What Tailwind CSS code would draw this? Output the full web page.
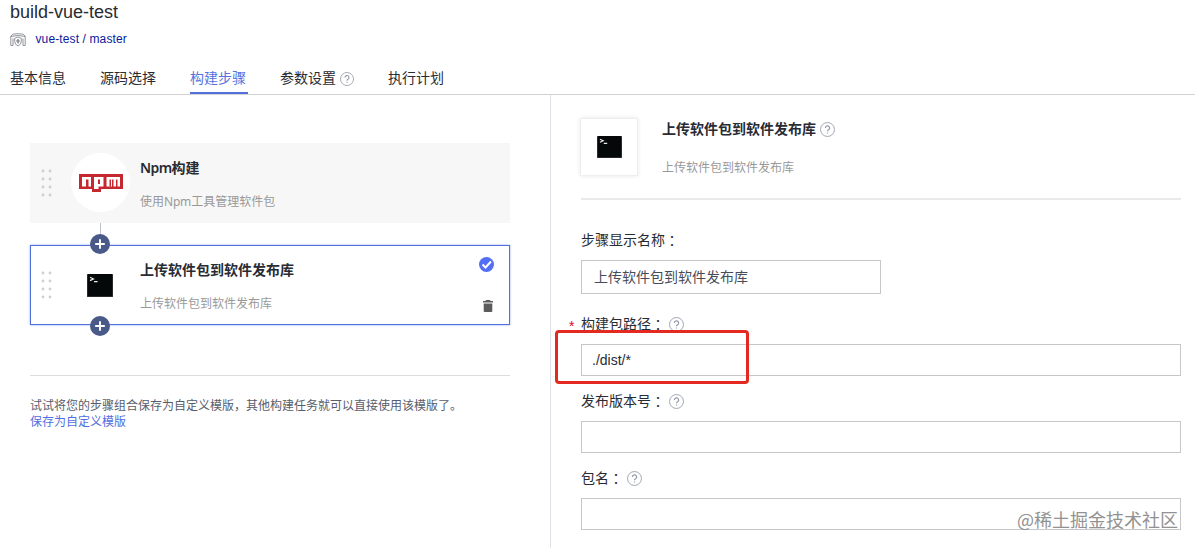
<!DOCTYPE html>
<html lang="zh-CN">
<head>
<meta charset="utf-8">
<title>build-vue-test</title>
<script src="https://cdn.jsdelivr.net/npm/@tailwindcss/browser@4"></script>
</head>
<body class="h-[548px] w-[1195px] overflow-hidden bg-white font-['Liberation_Sans','Noto_Sans_CJK_SC',sans-serif] text-sm leading-5 text-[#282b33]">
<svg class="hidden">
  <symbol id="help" viewBox="0 0 14 14"><circle cx="7" cy="7" r="6.5" fill="none" stroke="#9ea3ae" stroke-width=".9"/><path d="M5 5.600a2 2 0 1 1 3 1.700Q7 7.800 7 8.700M7 9.800v1" fill="none" stroke="#9299a8" stroke-width="1.100"/></symbol>
  <symbol id="dots" viewBox="0 0 11 28"><g fill="#cfcfcf"><circle cx="2" cy="2" r="1.400"/><circle cx="9" cy="2" r="1.400"/><circle cx="2" cy="10" r="1.400"/><circle cx="9" cy="10" r="1.400"/><circle cx="2" cy="18" r="1.400"/><circle cx="9" cy="18" r="1.400"/><circle cx="2" cy="26" r="1.400"/><circle cx="9" cy="26" r="1.400"/></g></symbol>
  <symbol id="terminal" viewBox="0 0 26 23"><rect width="26" height="23" rx="1" fill="#050808"/><path d="M.5 1v21.500h25V1" fill="none" stroke="#333" stroke-width=".8"/><path d="M3 3.300l3.500 1.600L3 6.600M7 7.700h3.600" fill="none" stroke="#e8e8e8" stroke-width="1.200"/></symbol>
  <symbol id="plus" viewBox="0 0 20 20"><circle cx="10" cy="10" r="10" fill="#4a5a88"/><path d="M10 5.200v9.600M5.200 10h9.600" stroke="#fff" stroke-width="1.900"/></symbol>
</svg>

<header class="flex h-[95px] flex-col border-b border-[#d2d2d6] px-2.5">
  <h1 class="h-6 text-[18px] leading-6">build-vue-test</h1>
  <div class="mt-1.5 flex h-[18px] items-center">
    <svg class="mt-0.5 h-[14px] w-4" viewBox="0 0 16 14" fill="none" stroke="#858990" stroke-width=".9"><path d="M3 12.500H.8V3.200L3 1.200Q8 .2 13 1.200l2.200 2v9.300H13M.8 3.500L4 3Q8 2 12 3l3.200.5M3 5.500v7M13 5.500v7"/><path d="M8 4l3.300 1.300v3.200q0 3-3.300 4.500q-3.300-1.500-3.300-4.500V5.300z"/><path d="M8 6v4.500M6.300 8h3.400" stroke-width="1.500"/></svg>
    <a class="ml-[9.500px] text-xs tracking-[0.120px] text-[#0a20a0]">vue-test / master</a>
  </div>
  <nav class="mt-[13px] flex h-[34px] shrink-0 gap-[34px] leading-[36px]">
    <a>基本信息</a>
    <a>源码选择</a>
    <a class="-mr-0.5 h-[34px] w-[58px] border-b-2 border-[#5170dc] text-[#5672e0]">构建步骤</a>
    <a class="flex h-9 items-center gap-1">参数设置<svg class="mt-0.5 size-[14px]"><use href="#help"/></svg></a>
    <a>执行计划</a>
  </nav>
</header>

<main class="flex h-[453px]">
  <section class="w-[551px] shrink-0 border-r border-[#dfe1e6] pl-[30px] pt-12">
    <div class="flex h-20 w-[480px] items-center bg-[#f7f7f7] pl-[11px]">
      <svg class="h-7 w-[11px]"><use href="#dots"/></svg>
      <div class="-mt-px ml-[19px] flex size-[59px] items-center justify-center rounded-full bg-white">
        <svg class="h-[18px] w-11" viewBox="0 0 44 18"><path d="M0 0h44v15H22v3h-9v-3H0z" fill="#c5282e"/><path d="M3 3h9v9.500H9.500V5.500h-2.500v7H3zM15 3h9.500v9.500h-5V15H15zM27.500 3H41v9.500h-2.500v-7h-1.500v7h-2.500v-7H33v7h-5.500z" fill="#fff"/><path d="M19 5.500h2v4.500h-2zM30.500 5.500h1.500v7h-1.500z" fill="#c5282e"/></svg>
      </div>
      <div class="ml-2.5 pt-[3px]">
        <h3 class="font-bold leading-5"><span class="font-['Noto_Sans'] font-semibold tracking-[-0.600px]">Npm</span>构建</h3>
        <p class="mt-3.5 text-xs leading-5 text-[#999]">使用<span class="font-['Noto_Sans'] tracking-[-0.200px]">Npm</span>工具管理软件包</p>
      </div>
    </div>
    <div class="ml-[70px] h-[22px] w-px bg-[#bfc3cc]"></div>
    <div class="relative flex h-20 w-[480px] items-center border border-[#5170dc] pl-[10px] shadow-[0_0_2px_#8fa4ff]">
      <svg class="h-7 w-[11px]"><use href="#dots"/></svg>
      <svg class="ml-[35px] h-[23px] w-[26px]"><use href="#terminal"/></svg>
      <div class="ml-[27px] pt-[3px]">
        <h3 class="font-bold leading-5">上传软件包到软件发布库</h3>
        <p class="mt-3.5 text-xs leading-5 text-[#999]">上传软件包到软件发布库</p>
      </div>
      <div class="ml-auto mr-[15px] flex h-full flex-col items-center pt-[11px]">
        <svg class="size-[15px]" viewBox="0 0 15 15"><circle cx="7.500" cy="7.500" r="7.500" fill="#526ff5"/><path d="M3.500 7.500l3 3 5.500-6" fill="none" stroke="#fff" stroke-width="2"/></svg>
        <svg class="ml-[3px] mt-7 h-3 w-3" viewBox="0 0 12 12" fill="#5c5c5c"><path d="M4 0h4l.5 1H11v1.500H1V1h2.500zM1.700 3.500h8.600V11q0 1-1 1H2.700q-1 0-1-1z"/></svg>
      </div>
      <svg class="absolute -top-[12px] left-[59px] size-5"><use href="#plus"/></svg>
      <svg class="absolute -bottom-[12px] left-[59px] size-5"><use href="#plus"/></svg>
    </div>
    <div class="mt-[50px] w-[480px] border-t border-[#dcdcdc] pt-[22px] text-xs leading-[17px] text-[#575d6c]">
      <p>试试将您的步骤组合保存为自定义模版，其他构建任务就可以直接使用该模版了。</p>
      <a class="-mt-px block text-[#526ee0]">保存为自定义模版</a>
    </div>
  </section>

  <section class="flex-1 pl-[30px] pr-3.5">
    <div class="flex h-[105px] border-b-2 border-[#e9e9e9] pt-6">
      <div class="-ml-px -mt-px flex size-[58px] items-center justify-center border border-[#eee] shadow-[0_0_4px_#0000001a]">
        <svg class="h-[22px] w-[25px]" preserveAspectRatio="none"><use href="#terminal"/></svg>
      </div>
      <div class="ml-6">
        <h2 class="flex items-center gap-1 font-bold leading-5">上传软件包到软件发布库<svg class="size-[15px]"><use href="#help"/></svg></h2>
        <p class="mt-[19px] text-xs leading-5 text-[#999]">上传软件包到软件发布库</p>
      </div>
    </div>
    <div class="mt-[30px] flex h-5 items-center">步骤显示名称<span class="font-['Noto_Sans_CJK_TC']" lang="zh-TW">：</span></div>
    <div class="mt-2.5 flex h-[34px] w-[300px] items-center border border-[#c7c7c7] px-3 text-[#464c59]">上传软件包到软件发布库</div>
    <div class="relative mt-5 flex h-5 items-center">
      <span class="absolute -left-3 top-0.5 text-sm text-[#e0021b]">*</span>构建包路径<span class="w-[18px] font-['Noto_Sans_CJK_TC']" lang="zh-TW">：</span><svg class="size-[15px]"><use href="#help"/></svg>
    </div>
    <div class="relative mt-2.5 flex h-8 items-center border border-[#c7c7c7] px-2.5">./dist/*
      <div class="absolute -left-[27px] -top-[15px] h-[54px] w-[194px] rounded-[4px] border-[3px] border-[#e42a20]"></div>
    </div>
    <div class="mt-[15px] flex h-5 items-center">发布版本号<span class="w-[18px] font-['Noto_Sans_CJK_TC']" lang="zh-TW">：</span><svg class="size-[15px]"><use href="#help"/></svg></div>
    <div class="mt-2.5 h-8 border border-[#c7c7c7]"></div>
    <div class="mt-[15px] flex h-5 items-center">包名<span class="w-[18px] font-['Noto_Sans_CJK_TC']" lang="zh-TW">：</span><svg class="size-[15px]"><use href="#help"/></svg></div>
    <div class="relative mt-2.5 h-8 border border-[#c7c7c7]">
      <span class="absolute -bottom-[2px] right-0.5 whitespace-nowrap font-['Noto_Sans_CJK_SC'] text-[18px] leading-6 text-[#929292]">@稀土掘金技术社区</span>
    </div>
  </section>
</main>
</body>
</html>
